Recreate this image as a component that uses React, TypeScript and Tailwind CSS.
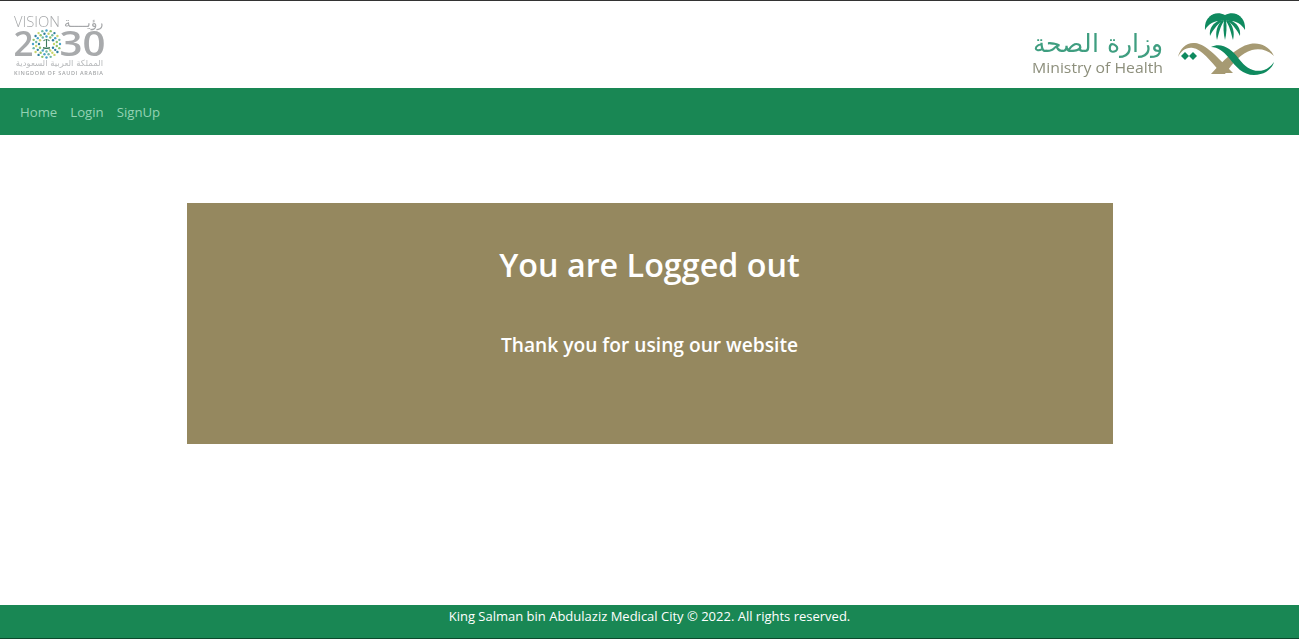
export default function App() {
  return (
    <div className="flex h-[639px] flex-col overflow-hidden bg-white font-['Open_Sans','Noto_Sans',sans-serif]">
      {/* Header with the two logos */}
      <header className="flex h-[88px] shrink-0 items-center justify-between border-t border-[#333] pl-3 pr-6">
        <Vision2030 />
        <MohLogo />
      </header>

      {/* Nav */}
      <nav className="flex h-[47px] shrink-0 items-center gap-[13px] bg-[#198754] pt-[2px] pl-5 text-[13.2px] text-[#93d2b3]">
        <a>Home</a>
        <a>Login</a>
        <a>SignUp</a>
      </nav>

      {/* Main */}
      <main className="flex-1 pt-[68px]">
        <div className="mx-auto flex h-[241px] w-[926px] flex-col items-center bg-[#95885f] pt-[41px] text-white">
          <h1 className="text-[32.3px] leading-[41px] font-semibold">You are Logged out</h1>
          <h3 className="mt-[47px] text-[19.2px] leading-[26px] font-semibold">Thank you for using our website</h3>
        </div>
      </main>

      {/* Footer */}
      <footer className="h-[34px] shrink-0 border-b border-[#0c4a2d] bg-[#198754] pt-px text-center text-[13px] leading-5 text-white">
        King Salman bin Abdulaziz Medical City © 2022. All rights reserved.
      </footer>
    </div>
  );
}

// dots of the star medallion in the 2030 logo
const ringDots = [13.5, 10.5, 7.5].flatMap((r, ring) =>
  Array.from({ length: 20 - ring * 4 }, (_, i) => {
    const a = ((i + ring * 0.5) / (20 - ring * 4)) * Math.PI * 2;
    return {
      x: 46.5 + Math.cos(a) * r,
      y: 44 + Math.sin(a) * r,
      color: ['#4aa3c7', '#8fc36a', '#2f7f9e', '#c9d56d', '#6fb7a5'][(i + ring) % 5],
    };
  }),
);

function Vision2030() {
  return (
    <svg width="94" height="70" viewBox="12 10 94 70" className="blur-[0.3px]">
      <text x="14" y="27" fontFamily="Open Sans" fontWeight="300" fontSize="14.500" fill="#a5a7a9" textLength="46" lengthAdjust="spacingAndGlyphs">
        VISION
      </text>
      <text x="103" y="27" textAnchor="end" fontFamily="DejaVu Sans" fontWeight="200" fontSize="13" fill="#a5a7a9">
        رؤيــــة
      </text>
      <text x="13.500" y="56" fontFamily="Open Sans" fontWeight="600" fontSize="35" fill="#a8aaac">
        2
      </text>
      <text x="59.500" y="56" fontFamily="Open Sans" fontWeight="600" fontSize="35" fill="#a8aaac" textLength="46" lengthAdjust="spacingAndGlyphs">
        30
      </text>
      {ringDots.map((d, i) => (
        <circle key={i} cx={d.x} cy={d.y} r="1.200" fill={d.color} />
      ))}
      {/* palm and swords in the middle of the star */}
      <path d="M46.500 39v8M43.500 41c1.500-2 4.500-2 6 0M43 49l7-1.500M50 49l-7-1.500" stroke="#3d7a5c" strokeWidth="1.100" fill="none" />
      <text x="103" y="66" textAnchor="end" fontFamily="DejaVu Sans" fontSize="8.500" fill="#b9bbbd">
        المملكة العربية السعودية
      </text>
      <text x="14" y="75" fontFamily="Open Sans" fontWeight="600" fontSize="5.500" fill="#a5a7a9" textLength="89">
        KINGDOM OF SAUDI ARABIA
      </text>
    </svg>
  );
}

function MohLogo() {
  return (
    <svg width="245" height="70" viewBox="1030 10 245 70" className="blur-[0.3px]">
      <text x="1163" y="52" textAnchor="end" fontFamily="DejaVu Sans" fontWeight="200" fontSize="25" fill="#3f9e80">
        وزارة الصحة
      </text>
      <text x="1032" y="73" fontFamily="Open Sans" fontSize="15" fill="#8d8f7c" textLength="131" lengthAdjust="spacingAndGlyphs">
        Ministry of Health
      </text>

      {/* palm */}
      <g fill="#0f8a5f">
        <path d="M1225 18C1214 10 1204 17 1205 30C1209 23 1216 20 1225 21Z" />
        <path d="M1225 18C1236 10 1246 17 1245 30C1241 23 1234 20 1225 21Z" />
        <path d="M1225 15C1219 12 1213 13 1209 17C1215 16 1220 17 1225 20Z" />
        <path d="M1225 15C1231 12 1237 13 1241 17C1235 16 1230 17 1225 20Z" />
        <path d="M1220 20C1213 23 1209 28 1210 36C1213 30 1216 26 1222 21Z" />
        <path d="M1230 20C1237 23 1241 28 1240 36C1237 30 1234 26 1228 21Z" />
        <path d="M1222 20C1217 26 1215 32 1217 40C1219 33 1220 27 1224 21Z" />
        <path d="M1228 20C1233 26 1235 32 1233 40C1231 33 1230 27 1226 21Z" />
        <path d="M1224 20H1226C1227 27 1226.500 34 1225 40C1223.500 34 1223 27 1224 20Z" />
      </g>

      {/* tan swooshes */}
      <path
        d="M1178 57C1180 48 1187 42 1195 43C1206 44 1216 56 1233 73H1221C1210 60 1201 49 1193 48C1186 47 1181 51 1178 57Z"
        fill="#a69a73"
      />
      <path
        d="M1211 74C1223 61 1236 47 1250 44C1260 42 1269 46 1274 56C1268 50 1260 48 1252 50C1241 53 1233 63 1225 74Z"
        fill="#a69a73"
      />

      {/* green swoosh */}
      <path
        d="M1211 47C1221 42 1231 48 1239 59C1246 68 1254 73 1264 70C1269 68 1272 65 1274 62C1272 69 1265 75 1254 75C1243 75 1236 67 1229 58C1223 51 1218 47 1211 47Z"
        fill="#0f8a5f"
      />

      {/* diamonds */}
      <path d="M1185 52l4 4-4 4-4-4ZM1193 52l4 4-4 4-4-4Z" fill="#0f8a5f" />
    </svg>
  );
}
